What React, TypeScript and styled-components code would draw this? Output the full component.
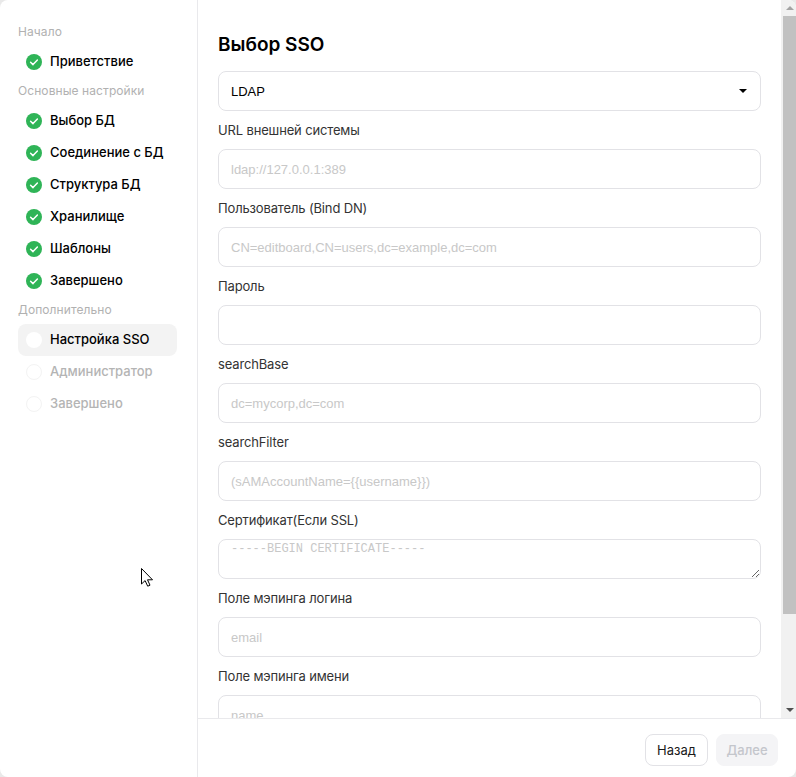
import React from 'react'
import styled, { createGlobalStyle } from 'styled-components'

const Global = createGlobalStyle`
  html, body { margin: 0; padding: 0; height: 100%; background: #e9e9e9; }
  #root { height: 100%; }
  * { box-sizing: border-box; }
`

const Modal = styled.div`
  position: relative;
  display: flex;
  width: 796px;
  height: 777px;
  background: #fff;
  border-radius: 8px;
  overflow: hidden;
  font-family: Inter, "Noto Sans", sans-serif;
`

const Sidebar = styled.aside`
  flex: 0 0 198px;
  padding: 19px 20px 0 18px;
  border-right: 1px solid #e9e9ec;
`

const GroupTitle = styled.div`
  height: 27px;
  line-height: 25px;
  font-size: 12px;
  letter-spacing: 0.08px;
  color: #b1b1b1;
`

const Step = styled.div<{ $active?: boolean; $muted?: boolean }>`
  display: flex;
  align-items: center;
  gap: 8px;
  height: 32px;
  padding-left: 8px;
  border-radius: 8px;
  font-size: 13px;
  font-weight: 500;
  color: ${p => (p.$muted ? '#b4b4b4' : '#000')};
  background: ${p => (p.$active ? '#f3f3f3' : 'transparent')};
`

const StepText = styled.span`
  margin-bottom: 2px;
`

const Dot = styled.span<{ $active?: boolean }>`
  flex: none;
  width: 16px;
  height: 16px;
  border-radius: 50%;
  background: #fff;
  border: ${p => (p.$active ? 'none' : '1px solid #f3f3f3')};
`

const Main = styled.div`
  flex: 1;
  min-width: 0;
  display: flex;
  flex-direction: column;
`

const Body = styled.div`
  display: flex;
  height: 718px;
`

const Content = styled.div`
  flex: 1;
  min-width: 0;
  overflow: hidden;
  padding: 33px 20px 0 20px;
`

const ScrollBar = styled.div`
  flex: 0 0 15px;
  display: flex;
  flex-direction: column;
  background: #f1f1f1;
`

const ArrowCell = styled.div`
  flex: 0 0 16px;
  display: flex;
  align-items: center;
  justify-content: center;
  padding-left: 2px;
`

const Arrow = styled.span<{ $down?: boolean }>`
  width: 0;
  height: 0;
  border-left: 4px solid transparent;
  border-right: 4px solid transparent;
  border-top: ${p => (p.$down ? '4px solid #505050' : 'none')};
  border-bottom: ${p => (p.$down ? 'none' : '4px solid #a3a3a3')};
`

const Thumb = styled.div`
  flex: 0 0 598px;
  margin-left: 2px;
  background: #c1c1c1;
`

const TrackRest = styled.div`
  flex: 1;
`

const Title = styled.h1`
  margin: 0 0 14px;
  height: 24px;
  line-height: 24px;
  font-size: 19px;
  font-weight: 600;
  color: #000;
`

const Fields = styled.div`
  display: flex;
  flex-direction: column;
`

const SelectBox = styled.div`
  display: flex;
  align-items: center;
  justify-content: space-between;
  height: 40px;
  padding: 0 13px 0 12px;
  border: 1px solid #e2e2e6;
  border-radius: 8px;
  font-family: "Liberation Sans", Arial, sans-serif;
  font-size: 13px;
  color: #000;
`

const Caret = styled.span`
  width: 0;
  height: 0;
  border-left: 4px solid transparent;
  border-right: 4px solid transparent;
  border-top: 4px solid #000;
`

const Label = styled.label`
  display: block;
  height: 38px;
  padding-top: 11px;
  line-height: 16px;
  font-size: 13px;
  letter-spacing: -0.15px;
  color: #333;
`

const Input = styled.input`
  display: block;
  flex: none;
  width: 100%;
  height: 40px;
  padding: 0 12px;
  border: 1px solid #e2e2e6;
  border-radius: 8px;
  outline: none;
  background: #fff;
  font-family: "Liberation Sans", Arial, sans-serif;
  font-size: 13px;
  &::placeholder { color: #c8c8c8; opacity: 1; }
`

const Area = styled.textarea`
  display: block;
  flex: none;
  width: 100%;
  height: 40px;
  padding: 1px 12px 0;
  border: 1px solid #e2e2e6;
  border-radius: 8px;
  outline: none;
  font-family: "Liberation Mono", monospace;
  font-size: 12px;
  line-height: 16px;
  &::placeholder { color: #c8c8c8; opacity: 1; }
`

const Footer = styled.footer`
  height: 59px;
  display: flex;
  align-items: flex-start;
  justify-content: flex-end;
  gap: 8px;
  padding: 15px 18px 0 0;
  border-top: 1px solid #e9e9ec;
`

const Button = styled.button<{ $disabled?: boolean }>`
  width: ${p => (p.$disabled ? 62 : 63)}px;
  height: 32px;
  padding: 0;
  border-radius: 8px;
  border: 1px solid ${p => (p.$disabled ? '#f4f4f6' : '#e2e2e6')};
  background: ${p => (p.$disabled ? '#f4f4f6' : '#fff')};
  color: ${p => (p.$disabled ? '#c4c6cc' : '#1a1a1a')};
  font-family: Inter, sans-serif;
  font-size: 13px;
  font-weight: ${p => (p.$disabled ? 500 : 400)};
`

const Pointer = styled.svg`
  position: absolute;
  left: 141px;
  top: 568px;
`

const Check = () => (
  <svg width="16" height="16" viewBox="0 0 16 16" style={{ flex: 'none' }}>
    <circle cx="8" cy="8" r="8" fill="#2fb457" />
    <path d="M4.6 8.2 7 10.6 11.4 6" fill="none" stroke="#fff" strokeWidth="1.5" strokeLinecap="round" strokeLinejoin="round" />
  </svg>
)

const groups = [
  { title: 'Начало', steps: ['Приветствие'] },
  { title: 'Основные настройки', steps: ['Выбор БД', 'Соединение с БД', 'Структура БД', 'Хранилище', 'Шаблоны', 'Завершено'] },
]

const fields = [
  { label: 'Пользователь (Bind DN)', placeholder: 'CN=editboard,CN=users,dc=example,dc=com' },
  { label: 'Пароль', placeholder: '' },
  { label: 'searchBase', placeholder: 'dc=mycorp,dc=com' },
  { label: 'searchFilter', placeholder: '(sAMAccountName={{username}})' },
]

export default function App() {
  return (
    <Modal>
      <Global />
      <Sidebar>
        {groups.map(g => (
          <div key={g.title}>
            <GroupTitle>{g.title}</GroupTitle>
            {g.steps.map(s => (
              <Step key={s}><Check /><StepText>{s}</StepText></Step>
            ))}
          </div>
        ))}
        <GroupTitle>Дополнительно</GroupTitle>
        <Step $active><Dot $active /><StepText>Настройка SSO</StepText></Step>
        <Step $muted><Dot /><StepText>Администратор</StepText></Step>
        <Step $muted><Dot /><StepText>Завершено</StepText></Step>
      </Sidebar>
      <Main>
        <Body>
          <Content>
            <Title>Выбор SSO</Title>
            <Fields>
              <SelectBox>LDAP<Caret /></SelectBox>
              <Label>URL внешней системы</Label>
              <Input placeholder="ldap://127.0.0.1:389" />
              {fields.map(f => (
                <React.Fragment key={f.label}>
                  <Label>{f.label}</Label>
                  <Input placeholder={f.placeholder} />
                </React.Fragment>
              ))}
              <Label>Сертификат(Если SSL)</Label>
              <Area placeholder="-----BEGIN CERTIFICATE-----" />
              <Label>Поле мэпинга логина</Label>
              <Input placeholder="email" />
              <Label>Поле мэпинга имени</Label>
              <Input placeholder="name" />
            </Fields>
          </Content>
          <ScrollBar>
            <ArrowCell><Arrow /></ArrowCell>
            <Thumb />
            <TrackRest />
            <ArrowCell><Arrow $down /></ArrowCell>
          </ScrollBar>
        </Body>
        <Footer>
          <Button>Назад</Button>
          <Button $disabled>Далее</Button>
        </Footer>
      </Main>
      <Pointer width="12" height="19" viewBox="0 0 12 19">
        <path d="M.5.5v15.5l3.6-3.4 2.6 5.6 2.3-1-2.5-5.4h5z" fill="#fff" stroke="#000" strokeWidth="1" />
      </Pointer>
    </Modal>
  )
}
